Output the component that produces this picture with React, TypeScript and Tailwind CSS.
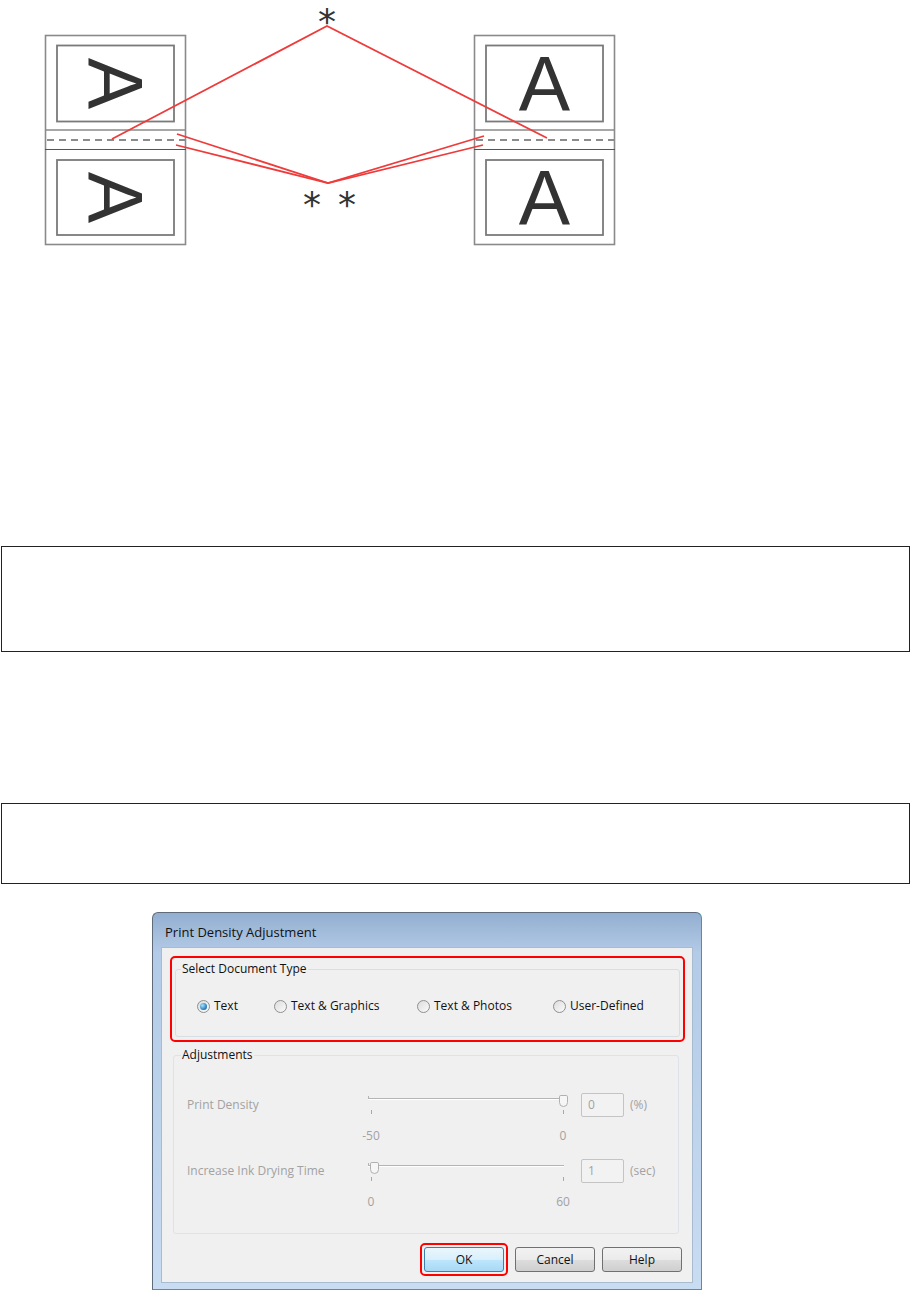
const red = '#ee3b3b';

function Letter({ cx, cy, turned }: { cx: number; cy: number; turned?: boolean }) {
  return (
    <text
      x={cx}
      y={cy + 27.5}
      textAnchor="middle"
      fontFamily="'Liberation Sans', Arial, sans-serif"
      fontSize={77}
      fill="#333"
      transform={turned ? `rotate(90 ${cx} ${cy})` : undefined}
    >
      A
    </text>
  );
}

function Sheet({ x, turned }: { x: number; turned?: boolean }) {
  return (
    <g>
      <rect x={x + 0.5} y={35.5} width={140} height={209} fill="#fff" stroke="#8a8a8a" strokeWidth={1.6} />
      <rect x={x + 12} y={45.5} width={117} height={76} fill="none" stroke="#7a7a7a" strokeWidth={1.8} />
      <line x1={x} x2={x + 141} y1={130} y2={130} stroke="#8a8a8a" strokeWidth={1.4} />
      <line x1={x + 2} x2={x + 141} y1={140} y2={140} stroke="#8c8c8c" strokeWidth={2} strokeDasharray="7 5" />
      <line x1={x} x2={x + 141} y1={149.5} y2={149.5} stroke="#555" strokeWidth={1.2} />
      <rect x={x + 12} y={160} width={117} height={75} fill="none" stroke="#7a7a7a" strokeWidth={1.8} />
      <Letter cx={x + 70.5} cy={83.5} turned={turned} />
      <Letter cx={x + 70.5} cy={197.5} turned={turned} />
    </g>
  );
}

function Star({ x, y }: { x: number; y: number }) {
  return (
    <text x={x} y={y + 17} textAnchor="middle" fontFamily="'DejaVu Sans', sans-serif" fontSize={36} fill="#333">
      *
    </text>
  );
}

function Diagram() {
  return (
    <svg width="640" height="250" viewBox="0 0 640 250" className="block">
      <Sheet x={45} turned />
      <Sheet x={474} />
      <g stroke={red} strokeWidth={1.8} fill="none">
        <polyline points="112,139 327,26 547,138" />
        <polyline points="177,134 328,183 484,136" />
        <polyline points="176,145 328,183 483,145" />
      </g>
      <Star x={327} y={16.5} />
      <Star x={312} y={200} />
      <Star x={347} y={200} />
    </svg>
  );
}

function Radio({ checked, label, w }: { checked?: boolean; label: string; w?: string }) {
  return (
    <div className={`flex items-center ${w ?? ''}`}>
      <span className="w-[13px] h-[13px] rounded-full border border-[#8e8f8f] bg-[linear-gradient(135deg,#dcdcdc,#fbfbfb)] flex items-center justify-center shrink-0">
        {checked && (
          <span className="w-[7px] h-[7px] rounded-full bg-[radial-gradient(circle_at_35%_35%,#a6e4fb,#2376bb_70%,#0d4f8a)]" />
        )}
      </span>
      <span className="ml-[4px] text-[12px] leading-[16px] text-[#111]">{label}</span>
    </div>
  );
}

function Slider({ thumbAt, min, max, track }: { thumbAt: 'start' | 'end'; min: string; max: string; track: number }) {
  const thumbLeft = thumbAt === 'end' ? 'left-[191px]' : 'left-[2px]';
  return (
    <div className="relative w-[200px] h-[52px] shrink-0">
      <div
        className="absolute left-0 w-[196px] h-[2px] border-t border-[#b4b4b4] border-b border-b-white"
        style={{ top: track }}
      />
      <div className="absolute left-0 w-px h-[3px] bg-[#b4b4b4]" style={{ top: track - 2 }} />
      <div className="absolute left-[3px] w-px h-[4px] bg-[#a8a8a8]" style={{ top: track + 12 }} />
      <div className="absolute left-[195px] w-px h-[4px] bg-[#a8a8a8]" style={{ top: track + 12 }} />
      <div
        className={`absolute ${thumbLeft} w-[9px] h-[12px] border border-[#b0b0b0] rounded-t-[2px] rounded-b-[5px] bg-[#f6f6f6]`}
        style={{ top: track - 3 }}
      />
      <span className="absolute top-[35px] left-[3px] -translate-x-1/2 text-[12px] leading-[16px] text-[#a2a2a2]">
        {min}
      </span>
      <span className="absolute top-[35px] left-[195px] -translate-x-1/2 text-[12px] leading-[16px] text-[#a2a2a2]">
        {max}
      </span>
    </div>
  );
}

function AdjustRow({
  label,
  value,
  unit,
  thumbAt,
  min,
  max,
  track,
}: {
  label: string;
  value: string;
  unit: string;
  thumbAt: 'start' | 'end';
  min: string;
  max: string;
  track: number;
}) {
  return (
    <div className="flex items-start h-[66px]">
      <div className="w-[181px] leading-[24px] text-[12px] text-[#a2a2a2]">{label}</div>
      <Slider thumbAt={thumbAt} min={min} max={max} track={track} />
      <div className="ml-[13px] w-[43px] h-[24px] border border-[#c4c4c4] rounded-[2px] bg-[#f2f2f2] pl-[6px] text-[12px] leading-[22px] text-[#a2a2a2]">
        {value}
      </div>
      <div className="ml-[6px] leading-[24px] text-[12px] text-[#a2a2a2]">{unit}</div>
    </div>
  );
}

function Button({ label, primary }: { label: string; primary?: boolean }) {
  return (
    <div
      className={`w-[80px] h-[25px] rounded-[3px] border flex items-center justify-center text-[12px] text-[#111] ${
        primary
          ? 'border-[#3c7fb1] bg-[linear-gradient(#eaf6fd,#d9f0fc_50%,#bee6fd_50%,#a7d9f5)]'
          : 'border-[#707070] bg-[linear-gradient(#f2f2f2,#ebebeb_50%,#dddddd_50%,#cfcfcf)]'
      }`}
    >
      {label}
    </div>
  );
}

function Dialog() {
  return (
    <div className="w-[550px] h-[378px] rounded-t-[6px] border border-[#5d6b7a] border-r-[#3f9aa3] border-b-[#3f9aa3] bg-[linear-gradient(#93aed0,#b3cbe7_40px,#c8dcf2)] px-[8px] font-['Open_Sans','Noto_Sans',sans-serif]">
      <div className="h-[34px] pt-[6px] pl-[4px] flex items-center text-[13px] text-[#111]">
        Print Density Adjustment
      </div>
      <div className="h-[336px] border border-[#a9bccf] bg-[#f0f0f0] flex flex-col">
        <div className="mt-[8px] ml-[8px] w-[515px] h-[86px] border-2 border-[#ff0000] rounded-[5px]">
          <fieldset className="mx-[3px] mt-[3px] h-[76px] border border-[#d5dfe5] rounded-[3px] px-[5px]">
            <legend className="px-[1px] text-[12px] leading-[16px] text-[#111]">Select Document Type</legend>
            <div className="mt-[21px] ml-[16px] flex items-center">
              <Radio checked label="Text" w="w-[77px]" />
              <Radio label="Text & Graphics" w="w-[143px]" />
              <Radio label="Text & Photos" w="w-[136px]" />
              <Radio label="User-Defined" />
            </div>
          </fieldset>
        </div>
        <fieldset className="mt-[5px] ml-[11px] w-[506px] h-[187px] border border-[#dde3e8] rounded-[3px] pl-[13px]">
          <legend className="ml-[-6px] px-[1px] text-[12px] leading-[16px] text-[#111]">Adjustments</legend>
          <div className="mt-[30px]">
            <AdjustRow label="Print Density" value="0" unit="(%)" thumbAt="end" min="-50" max="0" track={5} />
            <AdjustRow
              label="Increase Ink Drying Time"
              value="1"
              unit="(sec)"
              thumbAt="start"
              min="0"
              max="60"
              track={6}
            />
          </div>
        </fieldset>
        <div className="mt-[13px] flex justify-end pr-[10px]">
          <div className="-m-[4px] border-2 border-[#ff0000] rounded-[5px] p-[2px]">
            <Button label="OK" primary />
          </div>
          <div className="ml-[11px]">
            <Button label="Cancel" />
          </div>
          <div className="ml-[7px]">
            <Button label="Help" />
          </div>
        </div>
      </div>
    </div>
  );
}

export default function App() {
  return (
    <div className="w-[911px] h-[1290px] overflow-hidden bg-white font-['Liberation_Sans',sans-serif]">
      <Diagram />
      <div className="mt-[296px] ml-px w-[909px] h-[106px] border border-[#222]" />
      <div className="mt-[151px] ml-px w-[909px] h-[81px] border border-[#222]" />
      <div className="mt-[28px] ml-[152px]">
        <Dialog />
      </div>
    </div>
  );
}
